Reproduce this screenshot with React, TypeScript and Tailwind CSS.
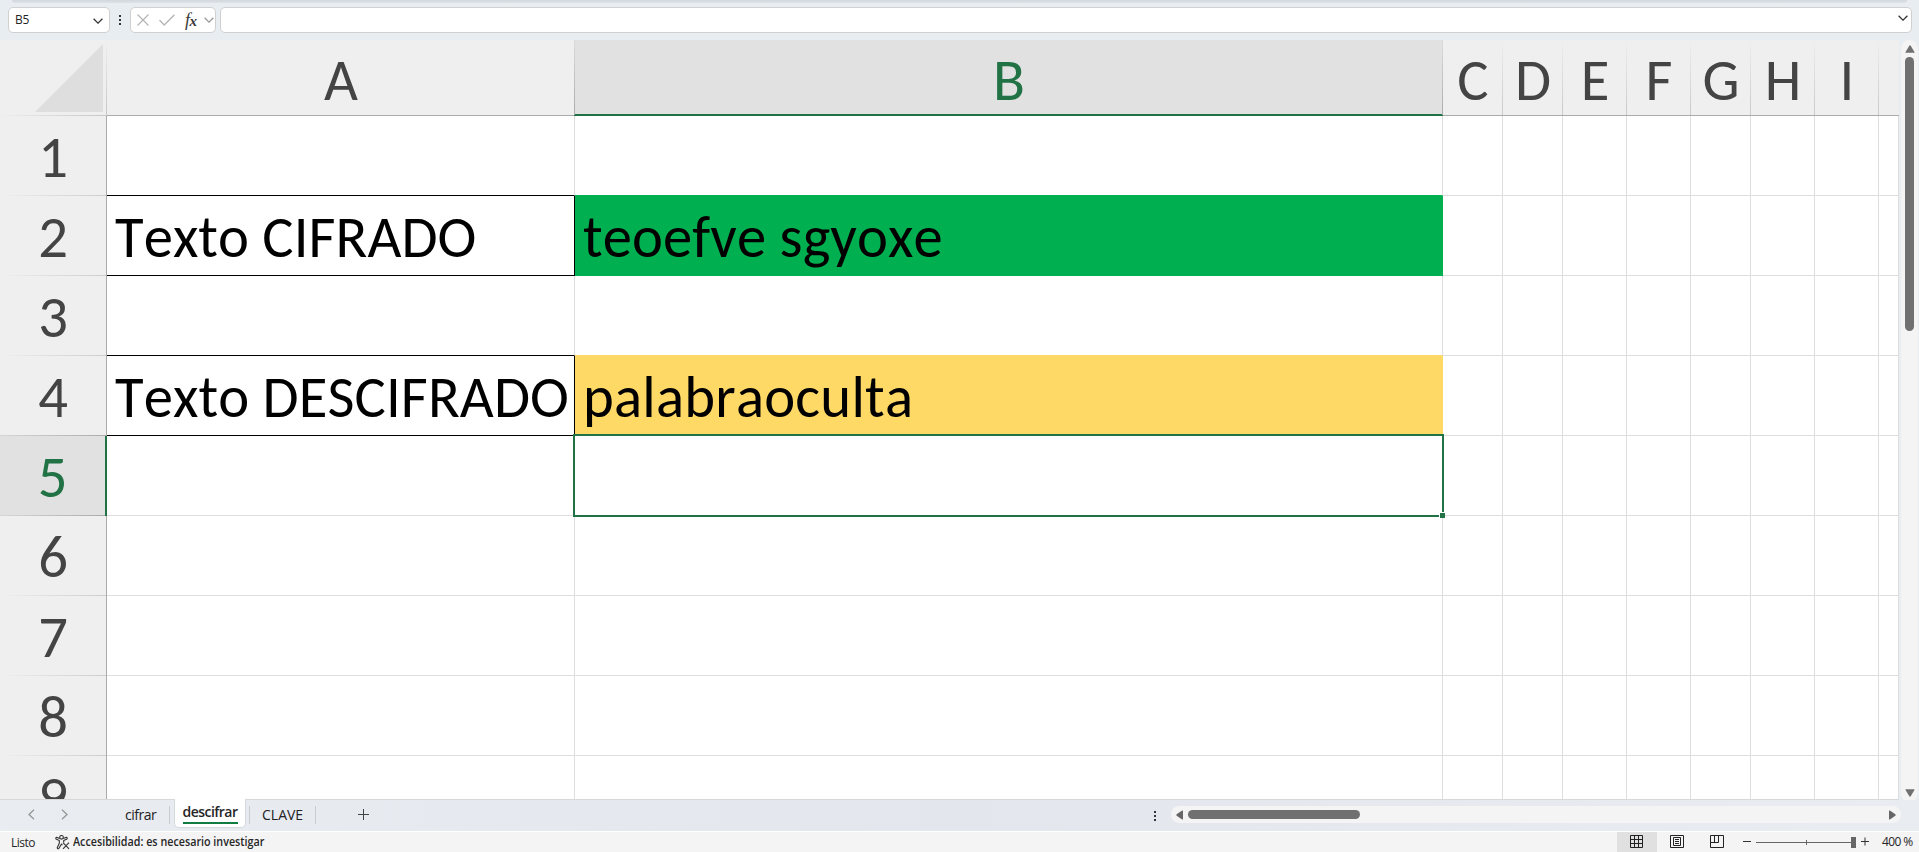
import type { ReactNode } from "react";

type Column = { name: string; width: string };

const columns: Column[] = [
  { name: "A", width: "w-[468px]" },
  { name: "B", width: "w-[868px]" },
  { name: "C", width: "w-[60px]" },
  { name: "D", width: "w-[60px]" },
  { name: "E", width: "w-[64px]" },
  { name: "F", width: "w-[64px]" },
  { name: "G", width: "w-[60px]" },
  { name: "H", width: "w-[64px]" },
  { name: "I", width: "w-[64px]" },
  { name: "", width: "w-[20px]" },
];

const rows = [1, 2, 3, 4, 5, 6, 7, 8, 9];

const gridFont = "font-['Carlito','Calibri','Open_Sans',sans-serif] text-[58.67px] [font-kerning:none] [font-variant-ligatures:none]";

const cellText: Record<string, { text: string; className: string }> = {
  A2: { text: "Texto CIFRADO", className: "pl-2 tracking-[0.06px]" },
  B2: { text: "teoefve sgyoxe", className: "pl-2 tracking-[0.1px]" },
  A4: { text: "Texto DESCIFRADO", className: "pl-2 tracking-[0.1px]" },
  B4: { text: "palabraoculta", className: "pl-2 tracking-[0.2px]" },
};

const cellStyle: Record<string, string> = {
  A1: "border-r-[#dedede] border-b-black",
  A2: "border-r-black border-b-black",
  A3: "border-r-[#dedede] border-b-black",
  A4: "border-r-black border-b-black",
  B1: "border-r-[#dedede] border-b-[#00b050]",
  B2: "border-[#00b050] bg-[#00b050]",
  B3: "border-r-[#dedede] border-b-[#ffd966]",
  B4: "border-[#ffd966] bg-[#ffd966]",
};

function Chevron({ className }: { className: string }) {
  return (
    <svg viewBox="0 0 10 6" className={`h-[6px] w-[10px] ${className}`} fill="none" stroke="currentColor" strokeWidth="1.3">
      <path d="M0.6 0.8 5 5.1 9.4 0.8" />
    </svg>
  );
}

function Dots({ className }: { className: string }) {
  return (
    <div className={`flex w-[2px] shrink-0 flex-col gap-[2px] ${className}`}>
      <i className="h-[2px] bg-[#333]" />
      <i className="h-[2px] bg-[#333]" />
      <i className="h-[2px] bg-[#333]" />
    </div>
  );
}

function FormulaBar() {
  return (
    <div className="flex h-10 shrink-0 flex-col bg-[#e8edf1]">
      <div className="mx-3 h-[3px] shrink-0 rounded-b bg-linear-to-b from-[#d2d8dd] to-[#dde2e7]" />
      <div className="mt-1 flex h-[26px] items-stretch pr-[7px] pl-2">
        <div className="flex w-[102px] items-center justify-between rounded-[5px] border border-[#d0d0d0] bg-white pr-[6px] pl-[6px]">
          <span className="text-[12px] leading-[24px] tracking-[-0.3px] text-[#262626]">B5</span>
          <Chevron className="mt-[2px] text-[#333]" />
        </div>
        <Dots className="mt-2 ml-[9px]" />
        <div className="ml-[9px] flex w-[86px] items-center rounded-[5px] border border-[#d0d0d0] bg-white pl-[6px]">
          <svg viewBox="0 0 12 12" className="h-3 w-3" stroke="#b5b5b5" strokeWidth="1.2">
            <path d="M0.5 0.5 11.5 11.5M11.5 0.5 0.5 11.5" />
          </svg>
          <svg viewBox="0 0 16 12" className="ml-[10px] h-3 w-4" fill="none" stroke="#b5b5b5" strokeWidth="1.3">
            <path d="M0.5 6 5.2 11 15.5 0.7" />
          </svg>
          <span className="ml-[10px] w-[15px] font-['Liberation_Serif',serif] text-[18px] leading-[20px] font-bold tracking-[-0.5px] text-[#3a3a3a] italic">
            <span className="font-normal">f</span>
            <span className="text-[15px]">x</span>
          </span>
          <Chevron className="ml-[4px] text-[#999]" />
        </div>
        <div className="ml-[4px] flex flex-1 justify-end rounded-[5px] border border-[#d0d0d0] bg-white pt-[7px] pr-[3px]">
          <Chevron className="text-[#333]" />
        </div>
      </div>
    </div>
  );
}

function ColumnHeaders() {
  return (
    <div className="flex h-[76px] shrink-0 bg-[#efefef]">
      <div className="flex w-[107px] shrink-0 flex-col">
        <div className="flex h-[75px] justify-end">
          <svg viewBox="0 0 68 68" className="mt-1 mr-[3px] h-[68px] w-[68px]">
            <path d="M68 0V68H0Z" fill="#dedede" />
          </svg>
          <i className="w-px bg-linear-to-b from-[#efefef] to-[#c6c6c6]" />
        </div>
        <i className="h-px bg-linear-to-r from-[#efefef] to-[#c6c6c6]" />
      </div>
      {columns.map(({ name, width }, i) => {
        const selected = name === "B";
        const edge = name === "A" || selected;
        return (
          <div key={i} className={`flex shrink-0 ${width}`}>
            <div
              className={`flex-1 overflow-hidden pl-px text-center leading-[80px] ${gridFont} ${
                selected ? "border-b-2 border-[#217346] bg-[#e1e1e1] text-[#217346]" : "border-b border-[#ababab] text-[#444]"
              }`}
            >
              {name}
            </div>
            {name && (
              <i
                className={`w-px border-b bg-linear-to-b ${
                  edge ? "border-[#217346] from-[#dcdcdc] to-[#ababab]" : "border-[#ababab] from-[#efefef] to-[#c9c9c9]"
                }`}
              />
            )}
          </div>
        );
      })}
    </div>
  );
}

function Row({ index }: { index: number }) {
  const selected = index === 5;
  const nearSelected = selected || index === 4;
  return (
    <div className="flex h-20 shrink-0">
      <div className={`flex w-[107px] shrink-0 ${selected ? "bg-[#e1e1e1] text-[#217346]" : "bg-[#efefef] text-[#444]"}`}>
        <div className={`flex flex-col ${selected ? "w-[105px]" : "w-[106px]"}`}>
          <div className={`h-[79px] text-center leading-[83px] ${gridFont}`}>{index}</div>
          <i className={`h-px bg-linear-to-r ${nearSelected ? "from-[#d6d6d6] to-[#ababab]" : "from-[#efefef] to-[#cdcdcd]"}`} />
        </div>
        <i className={selected ? "w-[2px] bg-[#217346]" : "w-px bg-[#ababab]"} />
      </div>
      {columns.map(({ name, width }, i) => {
        const id = `${name}${index}`;
        const content = cellText[id];
        return (
          <div key={i} className={`relative h-20 shrink-0 border-r border-b ${width} ${cellStyle[id] ?? "border-[#dedede]"}`}>
            {content && (
              <span className={`block leading-[83px] whitespace-nowrap text-black ${gridFont} ${content.className}`}>{content.text}</span>
            )}
            {id === "B5" && (
              <div className="absolute top-[-2px] left-[-2px] z-10 h-[83px] w-[871px] border-2 border-[#217346]">
                <i className="absolute right-[-3px] bottom-[-3px] h-[6px] w-[6px] border-t border-l border-white bg-[#217346]" />
              </div>
            )}
          </div>
        );
      })}
    </div>
  );
}

function VerticalScroll() {
  return (
    <div className="ml-[2px] flex h-[762px] w-[17px] flex-col items-center rounded-full bg-[#f4f4f4] pt-[5px] pb-[5px]">
      <svg viewBox="0 0 10 8" className="h-2 w-[10px] shrink-0">
        <path d="M5 0.3 Q5.5 0.3 6 1.2L9.6 7.2Q9.6 7.8 9 7.8H1Q0.4 7.8 0.4 7.2L4 1.2Q4.5 0.3 5 0.3Z" fill="#707070" />
      </svg>
      <div className="mt-1 h-[274px] w-[9px] shrink-0 rounded-full bg-[#707070]" />
      <svg viewBox="0 0 10 8" className="mt-auto h-2 w-[10px] shrink-0">
        <path d="M5 7.7Q5.5 7.7 6 6.8L9.6 0.8Q9.6 0.2 9 0.2H1Q0.4 0.2 0.4 0.8L4 6.8Q4.5 7.7 5 7.7Z" fill="#707070" />
      </svg>
    </div>
  );
}

function Tab({ children, className }: { children: ReactNode; className: string }) {
  return <span className={`shrink-0 text-[14px] leading-5 whitespace-nowrap text-[#222] ${className}`}>{children}</span>;
}

function SheetTabs() {
  return (
    <div className="flex h-[31px] shrink-0 items-start bg-linear-to-r from-[#e9edf2] via-[#e3e6ec] to-[#e9edf2]">
      <svg viewBox="0 0 40 11" className="mt-[9px] ml-[28px] h-[11px] w-10 shrink-0" fill="none" stroke="#999" strokeWidth="1.4">
        <path d="M6 0.8 1 5.5 6 10.2M34 0.8 39 5.5 34 10.2" />
      </svg>
      <Tab className="mt-[5px] ml-[57px] w-[44px] tracking-[-0.5px]">cifrar</Tab>
      <i className="mt-[6px] h-[18px] w-px shrink-0 bg-[#c9ccd1]" />
      <div className="-mt-px ml-[4px] flex h-[29px] w-[72px] shrink-0 flex-col items-center rounded-b-[5px] border-x border-b border-[#d6d9dd] bg-white">
        <span className="mt-[3px] text-[14px] leading-[20px] font-semibold tracking-[-0.55px] text-[#262626]">descifrar</span>
        <i className="h-[2px] w-[55px] bg-[#107c41]" />
      </div>
      <i className="mt-[6px] ml-[3px] h-[18px] w-px shrink-0 bg-[#c9ccd1]" />
      <Tab className="mt-[5px] ml-[12px] w-[53px]">CLAVE</Tab>
      <i className="mt-[6px] h-[18px] w-px shrink-0 bg-[#c9ccd1]" />
      <svg viewBox="0 0 11 11" className="mt-[9px] ml-[42px] h-[11px] w-[11px] shrink-0" stroke="#444" strokeWidth="1">
        <path d="M5.5 0V11M0 5.5H11" />
      </svg>
      <Dots className="mt-[11px] ml-[785px]" />
      <div className="mt-[6px] ml-[15px] flex h-[17px] w-[730px] shrink-0 items-center rounded-full bg-[#f4f4f4] pr-[5px] pl-[5px]">
        <svg viewBox="0 0 7 10" className="h-[10px] w-[7px] shrink-0">
          <path d="M7 1V9Q7 9.8 6.2 9.4L0.6 5.8Q0 5 0.6 4.2L6.2 0.6Q7 0.2 7 1Z" fill="#666" />
        </svg>
        <div className="ml-[5px] h-[9px] w-[172px] shrink-0 rounded-full bg-[#707070]" />
        <svg viewBox="0 0 7 10" className="ml-auto h-[10px] w-[7px] shrink-0">
          <path d="M0 1V9Q0 9.8 0.8 9.4L6.4 5.8Q7 5 6.4 4.2L0.8 0.6Q0 0.2 0 1Z" fill="#666" />
        </svg>
      </div>
    </div>
  );
}

function StatusBar() {
  return (
    <div className="flex h-[21px] shrink-0 items-stretch border-t border-white bg-[#f4f4f4] text-[12px] leading-[20px] text-[#262626]">
      <span className="ml-[11px] w-[44px] shrink-0 pt-px tracking-[-0.5px]">Listo</span>
      <svg viewBox="0 0 15 15" className="mt-[3px] h-[15px] w-[15px] shrink-0" fill="none" stroke="#333" strokeWidth="1.1" strokeLinejoin="round">
        <circle cx="6.5" cy="2.3" r="1.8" />
        <path d="M4.8 3.6 1.5 2.2Q0.4 2.8 1 3.9L4.3 5.5V8.3L2.2 12.8Q2.6 14.2 3.8 13.5L6.5 9 7.4 10.3M8.2 3.6 11.5 2.2Q12.6 2.8 12 3.9L8.7 5.5V7.6" />
        <path d="M8 7.6 14 13.9M14 7.6 8 13.9" />
      </svg>
      <span className="ml-[3px] w-[215px] shrink-0 origin-left scale-x-[0.895] font-semibold whitespace-nowrap text-[#262626]">
        Accesibilidad: es necesario investigar
      </span>
      <div className="ml-auto flex h-[20px] w-10 items-start justify-center bg-[#e0e0e0] pt-[3px]">
        <svg viewBox="0 0 13 13" className="-ml-[2px] h-[13px] w-[13px]" fill="none" stroke="#222">
          <path d="M0.5 0.5H12.5V12.5H0.5ZM4.5 0V13M8.5 0V13M0 4.5H13M0 8.5H13" />
        </svg>
      </div>
      <svg viewBox="0 0 14 13" className="mt-[3px] ml-[13px] h-[13px] w-[14px]" fill="none" stroke="#222">
        <path d="M0.5 0.5H13.5V12.5H0.5ZM3.5 2.5H10.5V10.5H3.5ZM5 4.5H9M5 6.5H9M5 8.5H9" />
      </svg>
      <svg viewBox="0 0 14 13" className="mt-[3px] ml-[26px] h-[13px] w-[14px]" fill="none" stroke="#222">
        <path d="M0.5 0.5H13.5V12.5H0.5ZM4.5 0V7.5M8.5 0V7.5M0 7.5H8.5" />
      </svg>
      <svg viewBox="0 0 126 13" className="mt-[3px] ml-[19px] h-[13px] w-[126px]">
        <path d="M0 6.5H8M118 6.5H126M122 2.5V10.5" stroke="#333" />
        <path d="M13 7.5H109M63.5 5V10" stroke="#666" />
        <path d="M108 2H113V13H108Z" fill="#666" />
      </svg>
      <span className="ml-[13px] w-[37px] whitespace-nowrap tracking-[-0.6px]">400 %</span>
    </div>
  );
}

export default function App() {
  return (
    <div className="flex h-[852px] w-[1919px] flex-col overflow-hidden bg-[#e8edf1] font-['Open_Sans','Noto_Sans',sans-serif]">
      <FormulaBar />
      <div className="flex h-[760px] shrink-0">
        <div className="flex w-[1899px] shrink-0 flex-col overflow-hidden border-b border-[#d6d9dc] bg-white">
          <ColumnHeaders />
          {rows.map((index) => (
            <Row key={index} index={index} />
          ))}
        </div>
        <VerticalScroll />
      </div>
      <SheetTabs />
      <StatusBar />
    </div>
  );
}
